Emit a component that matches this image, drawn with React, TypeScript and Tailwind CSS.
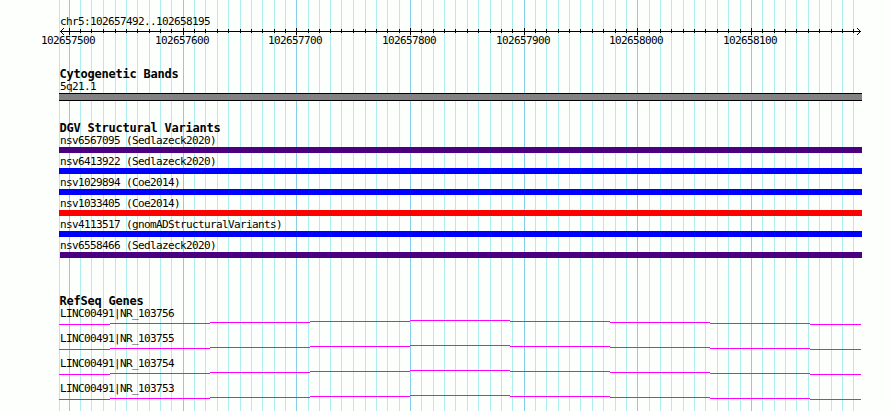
const MINOR = [
  59, 80, 91, 103, 115, 126, 137, 149, 160, 171, 194, 205, 217, 228, 240, 251, 262, 274, 285, 308, 319, 330, 341, 353,
  365, 376, 387, 399, 421, 433, 444, 455, 467, 478, 490, 501, 512, 535, 546, 558, 569, 580, 592, 603, 615, 626, 649,
  660, 671, 683, 694, 705, 717, 728, 740, 762, 774, 785, 796, 808, 819, 831, 842, 853,
];
const MAJOR = [69, 183, 296, 410, 524, 637, 751];

const LABELS = [
  { text: '102657500', gap: 'ml-[41px]' },
  { text: '102657600', gap: 'ml-[60px]' },
  { text: '102657700', gap: 'ml-[59px]' },
  { text: '102657800', gap: 'ml-[60px]' },
  { text: '102657900', gap: 'ml-[60px]' },
  { text: '102658000', gap: 'ml-[59px]' },
  { text: '102658100', gap: 'ml-[60px]' },
];

const VARIANTS = [
  { name: 'nsv6567095 (Sedlazeck2020)', bar: 'ml-[59px] bg-[#4b0082]' },
  { name: 'nsv6413922 (Sedlazeck2020)', bar: 'ml-[59px] bg-[#0000ff]' },
  { name: 'nsv1029894 (Coe2014)', bar: 'ml-[59px] bg-[#0000ff]' },
  { name: 'nsv1033405 (Coe2014)', bar: 'ml-[59px] bg-[#ff0000]' },
  { name: 'nsv4113517 (gnomADStructuralVariants)', bar: 'ml-[59px] bg-[#0000ff]' },
  { name: 'nsv6558466 (Sedlazeck2020)', bar: 'ml-[60px] bg-[#4b0082]' },
];

const GENES = ['NR_103756', 'NR_103755', 'NR_103754', 'NR_103753'];

function Grid() {
  return (
    <svg className="absolute inset-0" width="890" height="411" shapeRendering="crispEdges">
      {MINOR.map((x) => (
        <rect key={x} x={x} y="0" width="1" height="411" fill="#afeeee" />
      ))}
      {MAJOR.map((x) => (
        <rect key={x} x={x} y="0" width="1" height="411" fill="#87ceeb" />
      ))}
    </svg>
  );
}

function Ruler() {
  return (
    <svg className="block h-[7px] w-[890px]" viewBox="0 28 890 7" shapeRendering="crispEdges">
      <rect x="60" y="31" width="801" height="1" />
      {MINOR.slice(1).map((x) => (
        <rect key={x} x={x} y="29" width="1" height="4" />
      ))}
      {MAJOR.map((x) => (
        <rect key={x} x={x} y="28" width="1" height="7" />
      ))}
      {[1, 2, 3].map((d) => (
        <g key={d}>
          <rect x={60 + d} y={31 - d} width="1" height="1" />
          <rect x={60 + d} y={31 + d} width="1" height="1" />
          <rect x={860 - d} y={31 - d} width="1" height="1" />
          <rect x={860 - d} y={31 + d} width="1" height="1" />
        </g>
      ))}
    </svg>
  );
}

function Intron() {
  return (
    <svg className="block h-[13px] w-[890px]" viewBox="0 1 890 13" shapeRendering="crispEdges">
      <path
        d="M59 5.5H110M110 4.5H210M210 3.5H310M310 2.5H410M410 1.5H510M510 2.5H610M610 3.5H710M710 4.5H810M810 5.5H861"
        stroke="#ff00ff"
        strokeWidth="1"
        fill="none"
      />
    </svg>
  );
}

function Title({ children }: { children: string }) {
  return (
    <h2 className="ml-[59.5px] h-[13px] text-[12px] leading-[13px] font-bold tracking-[-0.224px]">{children}</h2>
  );
}

export default function App() {
  return (
    <main className="relative h-[411px] w-[890px] overflow-hidden bg-[#fdfffc] font-['DejaVu_Sans_Mono',monospace] text-[11px] leading-[12px] tracking-[-0.622px] whitespace-pre text-black">
      <Grid />
      <div className="relative flex flex-col pt-4">
        <div className="h-3 pl-[60px]">chr5:102657492..102658195</div>
        <Ruler />
        <div className="flex h-3">
          {LABELS.map((l) => (
            <span key={l.text} className={`w-[54px] shrink-0 ${l.gap}`}>
              {l.text}
            </span>
          ))}
        </div>
        <section className="mt-[21px]">
          <Title>Cytogenetic Bands</Title>
          <div className="h-3 pl-[60px]">5q21.1</div>
          <div className="ml-[59px] h-2 w-[803px] border-y border-black bg-[#848184]" />
        </section>
        <section className="mt-[21px]">
          <Title>DGV Structural Variants</Title>
          <div className="flex flex-col gap-[3px]">
            {VARIANTS.map((v) => (
              <div key={v.name} className="pr-7">
                <div className="h-3 pl-[60px]">{v.name}</div>
                <div className={`h-1.5 ${v.bar}`} />
              </div>
            ))}
          </div>
        </section>
        <section className="mt-[37px]">
          <Title>RefSeq Genes</Title>
          {GENES.map((g) => (
            <div key={g}>
              <div className="h-3 pl-[60px]">{`LINC00491|${g}`}</div>
              <Intron />
            </div>
          ))}
        </section>
      </div>
    </main>
  );
}
